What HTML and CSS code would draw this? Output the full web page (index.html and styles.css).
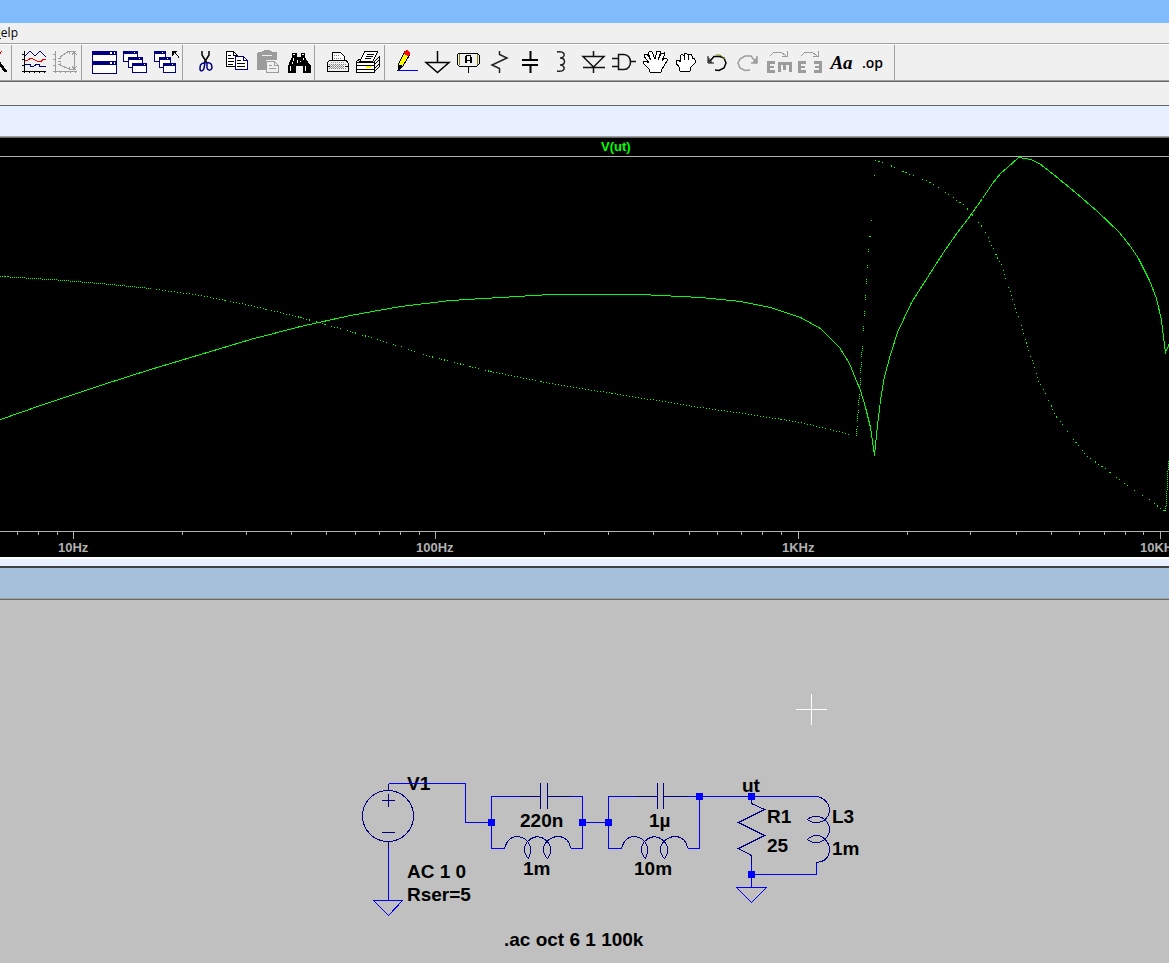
FILE: index.html
```html
<!DOCTYPE html>
<html lang="en">
<head>
<meta charset="utf-8">
<title>V(ut)</title>
<link rel="stylesheet" href="styles.css">
</head>
<body>
<div class="app">
  <div class="titlebar"></div>
  <nav class="menu"><button class="menu-item" type="button"><u>H</u>elp</button></nav>
  <div class="toolbar">
    <div class="group group-cut">
      <button class="tool" type="button" aria-label="Run"><svg class="icon" viewBox="0 0 31 34"><path d="M17 14L26 26" stroke="#000" stroke-width="3"/><path d="M19 9L22 5" stroke="#f00" stroke-width="1"/></svg></button>
    </div>
    <div class="group">
      <button class="tool" type="button" aria-label="Pick visible traces"><svg class="icon" viewBox="0 0 31 34"><path d="M5 5V27M3 25H27M3 8H5M3 13H5M3 19H5M10 25V27M15 25V27M20 25V27M25 25V27" class="k"/><path d="M6 10L11 5L16 10L21 5L27 11" class="n"/><path d="M6 14L9 14L12 12L18 15L22 16L24 13L27 14" stroke="#f00"/><path d="M6 18H11V20H15L18 18H20V20H27" class="n"/></svg></button>
      <button class="tool" type="button" aria-label="Autorange"><svg class="icon" viewBox="0 0 31 34"><path d="M5 5V27M3 25H27M3 8H5M3 13H5M3 19H5M10 25V27M15 25V27M20 25V27M25 25V27M26 5H19L10 11M10 19L19 23L26 24M8 12H11M10 11V13M8 15H11M8 18H11M10 17V20M24 6V23M22 9L24 6L27 9M22 20L24 23L27 20M19 5V8M19 21V24" class="g"/></svg></button>
    </div>
    <div class="group">
      <button class="tool" type="button" aria-label="Tile windows"><svg class="icon" viewBox="0 0 31 34"><path d="M3 5H27V27H3Z" fill="#fff" class="n"/><path d="M3 5H28V9H3ZM3 15H28V19H3Z" fill="#000080" stroke="none"/><path d="M21 6H23V8H21ZM25 6H26V8H25ZM21 16H23V18H21ZM25 16H26V18H25Z" fill="#fff" stroke="none"/></svg></button>
      <button class="tool" type="button" aria-label="Cascade windows"><svg class="icon" viewBox="0 0 31 34"><g fill="#fff" class="n"><path d="M3 5H17V15H3Z"/><path d="M3 7H17M3 6H17"/><path d="M8 11H22V21H8Z"/><path d="M8 13H22M8 12H22"/><path d="M12 17H26V26H12Z"/><path d="M12 19H26M12 18H26"/></g><path d="M14 6H15M19 12H20M24 18H25" stroke="#fff"/></svg></button>
      <button class="tool" type="button" aria-label="Close all windows"><svg class="icon" viewBox="0 0 31 34"><g fill="#fff" class="n"><path d="M3 5H14V15H3Z"/><path d="M3 7H14M3 6H14"/><path d="M8 11H19V21H8Z"/><path d="M8 13H19M8 12H19"/><path d="M12 17H24V26H12Z"/><path d="M12 19H24M12 18H24"/></g><path d="M11 6H12M16 12H17M21 18H22" stroke="#fff"/><path d="M27 12V10L22 5M21 10V5H26M22 9V6H25" class="k"/></svg></button>
    </div>
    <div class="group">
      <button class="tool" type="button" aria-label="Cut"><svg class="icon smooth" viewBox="0 0 31 34"><path d="M12 5V9L17 17M19 5V9L14 17" stroke="#000" stroke-width="1.5"/><path d="M15 17C10 17 10 20 10 23C10 26 14 25 14 22ZM17 17C21 16 22 19 22 22C21 25 18 25 17 22Z" stroke="#000080" stroke-width="1.5"/></svg></button>
      <button class="tool" type="button" aria-label="Copy"><svg class="icon" viewBox="0 0 31 34"><path d="M5 5H12L16 9V20H5Z" fill="#fff" class="k"/><path d="M12 5V9H16M7 9H10M7 12H13M7 15H13M7 18H12" class="k"/><path d="M14 10H22L26 14V23H14Z" fill="#fff" class="n"/><path d="M22 10V14H26" class="n"/><path d="M16 14H20M16 17H24M16 20H24" class="k"/></svg></button>
      <button class="tool" type="button" aria-label="Paste"><svg class="icon" viewBox="0 0 31 34"><path d="M5 8Q5 6 7 6H10Q11 4 15 4Q19 4 20 6H23Q25 6 25 8V14H14V24H7Q5 24 5 22Z" fill="#9c9c9c" stroke="none"/><path d="M10 9H20" stroke="#f0f0f0"/><path d="M14 15H22L26 19V26H14Z" fill="#f0f0f0" class="g"/><path d="M22 15V19H26M17 19H20M17 22H24" class="g"/></svg></button>
      <button class="tool" type="button" aria-label="Find"><svg class="icon" viewBox="0 0 31 34"><path d="M9 7H14V11H18V7H22V11L25 16L28 20V27H20V20H13V27H5V20L7 15L9 11Z" fill="#000" stroke="none"/><path d="M10 8H12M19 8H21M10 12V15M9 16V18M7 20V25M14 14V17M17 15H18M22 20V25M20 12V14" stroke="#fff"/></svg></button>
    </div>
    <div class="group">
      <button class="tool" type="button" aria-label="Print"><svg class="icon" viewBox="0 0 31 34"><path d="M10 14L11 6H18L22 10V14" fill="#fff" class="k"/><path d="M12 9H17M12 12H20M7 18H25M7 20H25M7 22H25" stroke="#808080" stroke-dasharray="1 1"/><path d="M8 14H24L26 17V25H5V17ZM5 20H8M23 20H26" class="k"/><path d="M8 19H22M8 21H22M9 16H23" stroke="#999" stroke-dasharray="1 1"/></svg></button>
      <button class="tool" type="button" aria-label="Print setup"><svg class="icon" viewBox="0 0 31 34"><path d="M7 15L12 5H25L20 15Z" fill="#fff" class="k"/><path d="M14 8H21M13 10H20M12 12H18" class="k"/><path d="M3 16H21V26H3Z" fill="#fff" class="k"/><path d="M3 16L7 13M21 16L26 11V21L21 26M3 23H21L26 18M3 19H21L26 14" class="k"/><path d="M13 21H18" stroke="#ff0" stroke-width="2"/></svg></button>
    </div>
    <div class="group">
      <button class="tool" type="button" aria-label="Wire"><svg class="icon" viewBox="0 0 31 34"><path d="M7 17L13 5L18 8L11 20L6 24Z" fill="#ff0" class="k"/><path d="M6 18L11 20L6 25Z" fill="#000" stroke="none"/><path d="M13 5L15 4L18 6V9L16 10L12 8Z" fill="#f00" stroke="none"/><path d="M6 24H26" stroke="#00f"/></svg></button>
      <button class="tool" type="button" aria-label="Ground"><svg class="icon smooth" viewBox="0 0 31 34"><path d="M14.5 5V16M3 16.5H26L14.5 26.5Z" stroke="#000" stroke-width="1.5"/></svg></button>
      <button class="tool" type="button" aria-label="Label net"><svg class="icon" viewBox="0 0 31 34"><path d="M5 7H23L25 9V18L23 20H5L3 18V9ZM14 20V27" class="k"/><path d="M5 8V19M23 8V19" stroke="#808000"/><path d="M11 17V11L13 9H16L17 11V17M11 14H17M12 10V17M16 10V17" class="k"/></svg></button>
      <button class="tool" type="button" aria-label="Resistor"><svg class="icon smooth" viewBox="0 0 31 34"><path d="M14.5 5V8.5L22 12L7 19L14.5 22.5V27" stroke="#222" stroke-width="1.5"/></svg></button>
      <button class="tool" type="button" aria-label="Capacitor"><svg class="icon smooth" viewBox="0 0 31 34"><path d="M14.5 5V13M14.5 20V27M6 14H22M6 19H22" stroke="#000" stroke-width="2"/></svg></button>
      <button class="tool" type="button" aria-label="Inductor"><svg class="icon smooth" viewBox="0 0 31 34"><path d="M10 6C19 4 19 12 13 12C19 12 19 19 13 19C19 19 19 27 10 25" stroke="#222" stroke-width="1.5"/></svg></button>
      <button class="tool" type="button" aria-label="Diode"><svg class="icon smooth" viewBox="0 0 31 34"><path d="M15.5 5V10M5 10.5H26L15.5 21ZM5 21.5H27M15.5 21V27" stroke="#111" stroke-width="1.5"/></svg></button>
      <button class="tool" type="button" aria-label="Component"><svg class="icon smooth" viewBox="0 0 31 34"><path d="M9.5 8.5H15C19 8.5 21.5 12 21.5 16C21.5 20 19 23.5 15 23.5H9.500ZM3 12.500H9M3 20.500H9M21 15.500H27" stroke="#111" stroke-width="1.5"/></svg></button>
      <button class="tool" type="button" aria-label="Move"><svg class="icon" viewBox="0 0 31 34"><path d="M10 26L9 23L3 17V15H6L9 17L4 10V8H7L11 14L8 7L10 5L12 6L15 13L17 5H20V8L18 14L21 8L24 7V10L22 15L25 12L27 13V15L22 23L21 26Z" fill="#fff" class="k"/></svg></button>
      <button class="tool" type="button" aria-label="Drag"><svg class="icon" viewBox="0 0 31 34"><path d="M9 25L8 21L5 17V14H8L9 16V10L11 8L13 10V14V8L15 7L17 9V14V9L20 8L21 10V13L23 12L24 14V17L20 21L19 25Z" fill="#fff" class="k"/></svg></button>
      <button class="tool" type="button" aria-label="Undo"><svg class="icon smooth" viewBox="0 0 31 34"><path d="M8 15L12 10.500H18L22 12L24 17L22 22L17 24.500L13 24" stroke="#000" stroke-width="1.500"/><path d="M14 9H18L23 13" stroke="#808000"/><path d="M6 10V17H12M7 12V16H10M8 14V15" class="k"/></svg></button>
      <button class="tool" type="button" aria-label="Redo"><svg class="icon smooth" viewBox="0 0 31 34"><path d="M22 15L18 10H12L7 13L5 17L7 22L12 24.500L17 24M24 10V17H18M23 12V16H20" stroke="#9c9c9c" stroke-width="1.500"/></svg></button>
      <button class="tool" type="button" aria-label="Rotate"><svg class="icon" viewBox="0 0 31 34"><path d="M6 10L10 6H17L22 10M23 5V10H18" class="g"/><path d="M3 15H11V18H6V20H10V22H6V24H11V27H3ZM14 16H28V26H25V19H22V24H19V19H17V26H14Z" fill="#9c9c9c"/></svg></button>
      <button class="tool" type="button" aria-label="Mirror"><svg class="icon" viewBox="0 0 31 34"><path d="M6 10L10 6H17L22 10M23 5V10H18" class="g"/><path d="M3 15H11V18H6V20H10V22H6V24H11V27H3ZM27 15H19V18H24V20H20V22H24V24H19V27H27Z" fill="#9c9c9c"/></svg></button>
      <button class="tool text-tool" type="button">Aa</button>
      <button class="tool op-tool" type="button">.op</button>
    </div>
  </div>
  <div class="tabstrip"></div>
  <section class="pane plot-pane">
    <div class="pane-title"></div>
    <svg class="plot" role="img" aria-label="AC response of V(ut)">
      <text x="601" y="13" class="trace-name">V(ut)</text>
      <g class="axis">
        <rect x="0" y="18" width="100%" height="1"/>
        <rect x="0" y="393" width="100%" height="1"/>
        <path class="tick" transform="translate(.5 0)" d="M17 393v4M38 393v4M57 393v4M73 393v8M182 393v4M246 393v4M291 393v4M326 393v4M355 393v4M379 393v4M400 393v4M419 393v4M435 393v8M544 393v4M608 393v4M653 393v4M689 393v4M717 393v4M741 393v4M762 393v4M781 393v4M798 393v8M907 393v4M970 393v4M1016 393v4M1051 393v4M1079 393v4M1104 393v4M1125 393v4M1143 393v4M1160 393v8"/>
        <text x="58" y="414">10Hz</text>
        <text x="416" y="414">100Hz</text>
        <text x="782" y="414">1KHz</text>
        <text x="1140" y="414">10KHz</text>
      </g>
      <g class="trace" transform="translate(.5 -137.5)">
        <path d="M0 419L40 405L100 385L150 369L200 354L250 339L300 326L350 315L400 306L450 300L500 297L550 294L600 294L640 294L700 297L740 301L770 307L800 317L820 328L839 347L849 363L855 378L860 390L865 407L870 427L874 455L877 425L880 400L884 376L890 354L897 332L911 302L927 277L943 252L957 232L967 219L977 205L982 198L992 183L1000 173L1007 167L1018 157L1030 159L1039 163L1053 174L1075 192L1097 211L1119 232L1130 246L1138 258L1149 280L1156 298L1161 320L1165 352L1169 343"/>
        <path stroke-dasharray="1 1" d="M0 276L50 279L100 283L150 288"/>
        <path stroke-dasharray="1 2" d="M150 288L200 295L250 305L300 317"/>
        <path stroke-dasharray="1 2 1 2 1 2 1 6" d="M300 317L350 331L400 346L430 356L490 371"/>
        <path stroke-dasharray="1 2" d="M490 371L550 383L600 391L650 399L700 407L750 414L800 422L850 434"/>
        <path stroke-dasharray="1 1 1 1 1 1 1 1 1 1 1 5" d="M856 436L857 420L859 393L862 343"/>
        <path stroke-dasharray="1 1 1 1 1 11" d="M863 331L864 314L866 280L867 265"/>
        <path stroke-dasharray="1 1 1 13" d="M868 252L869 236"/>
        <path d="M869 236h1M870 220h1M873 175h1M874 160h1"/>
        <path stroke-dasharray="1 3 1 8" d="M878 161L890 165L905 172"/>
        <path stroke-dasharray="1 3 1 3 1 3 1 5" d="M905 172L930 182L947 193L965 206L974 217L984 229L991 245L1001 265L1008 286L1014 305L1021 326L1030 355L1038 380L1046 395L1055 415L1065 428L1077 444L1087 456L1103 467L1120 480L1138 493L1150 500L1160 508L1165 511"/>
        <path stroke-dasharray="1 1" d="M1165 511L1166 500L1168 460"/>
      </g>
    </svg>
    <div class="pane-edge"></div>
  </section>
  <section class="pane schematic-pane">
    <div class="schematic-title"></div>
    <svg class="schematic" role="img" aria-label="Filter schematic">
      <defs>
        <path id="coil" d="M504 848C506 840 511 836 516 836C524 836 530 842 530 849C530 853 529 856 528 858C526 856 524 853 524 849C524 842 530 837 537 836C544 837 550 842 550 849C550 853 549 856 547 858C545 856 543 853 543 849C543 842 550 836 558 836C564 836 569 840 570 848"/>
      </defs>
      <g class="labels" transform="translate(0 -600)">
        <text x="407" y="790">V1</text>
        <text x="407" y="878">AC 1 0</text>
        <text x="407" y="901">Rser=5</text>
        <text x="520" y="827">220n</text>
        <text x="523" y="875">1m</text>
        <text x="649" y="827">1µ</text>
        <text x="634" y="875">10m</text>
        <text x="742" y="792">ut</text>
        <text x="767" y="823">R1</text>
        <text x="767" y="852">25</text>
        <text x="832" y="823">L3</text>
        <text x="832" y="855">1m</text>
        <text x="504" y="946">.ac oct 6 1 100k</text>
      </g>
      <g class="part" transform="translate(.5 -599.5)">
        <circle cx="387.5" cy="815.5" r="25.5"/>
        <path d="M381 800H394M388 793V806M381 832H394M388 783V790M388 841V847"/>
        <path d="M519 796H540M547 796H570M540 782V808M547 782V808M634 796H657M663 796H687M657 782V808M663 782V808"/>
        <use href="#coil"/>
        <use href="#coil" x="117"/>
        <path d="M751 799V803L764 809L738 822L764 835L738 848L751 855V862"/>
        <path d="M817 796C825 798 829 804 829 809C829 816 824 822 816 822C812 822 809 821 807 819C809 817 812 816 816 816C823 816 829 822 829 829C829 836 823 842 816 842C812 842 809 841 807 839C809 837 812 835 816 835C823 835 829 842 829 849C829 856 825 861 816 862"/>
      </g>
      <g class="wire" transform="translate(.5 -599.5)">
        <path d="M388 783H465V822H491M388 847V900M373 900H402L388 915Z"/>
        <path d="M519 796H491V848H504M570 796H582V848H570M582 822H608M634 796H608V848H621M687 796H699V848H687M687 796H817M816 862V874H751M751 862V887M736 887H766L751 902Z"/>
      </g>
      <g class="node" transform="translate(0 -600)">
        <rect x="488" y="819" width="7" height="7"/><rect x="579" y="819" width="7" height="7"/><rect x="605" y="819" width="7" height="7"/><rect x="696" y="793" width="7" height="7"/><rect x="748" y="793" width="7" height="7"/><rect x="748" y="871" width="7" height="7"/>
      </g>
      <path class="cursor" transform="translate(.5 -599.5)" d="M795 709H826M811 693V724"/>
    </svg>
  </section>
</div>
</body>
</html>
```
FILE: styles.css
```css
* { box-sizing: border-box; }

body {
  margin: 0;
  background: #f0f0f0;
  font-family: "Liberation Sans", Arial, sans-serif;
}

.app {
  display: flex;
  flex-direction: column;
  min-height: 100vh;
  overflow: hidden;
}

.titlebar {
  height: 23px;
  background: #80bcfc;
}

.menu {
  display: flex;
  height: 21px;
  border-bottom: 1px solid #a0a0a0;
}

.menu-item {
  margin: 0 0 0 -8px;
  padding: 0;
  border: 0;
  background: none;
  color: #000;
  font: 12px/20px "Open Sans", sans-serif;
}

.toolbar {
  display: flex;
  height: 38px;
  border-top: 1px solid #fff;
  border-bottom: 1px solid #696969;
  box-shadow: inset 0 -1px #a0a0a0;
}

.group {
  display: flex;
  flex: none;
  margin-bottom: 1px;
  padding: 1px 0 0 7px;
  border-left: 1px solid #a0a0a0;
}

.group:first-child {
  border-left: 0;
}

.group:last-child {
  padding-right: 6px;
  border-right: 1px solid #a0a0a0;
}

.group-cut {
  width: 11px;
  padding-left: 0;
  justify-content: flex-end;
  overflow: hidden;
}

.tool {
  flex: none;
  width: 31px;
  height: 34px;
  padding: 0;
  border: 0;
  background: none;
  color: #000;
}

.icon {
  display: block;
  width: 31px;
  height: 34px;
  fill: none;
  shape-rendering: crispEdges;
}

.smooth { shape-rendering: auto; }
.k { stroke: #000; }
.n { stroke: #000080; }
.g { stroke: #9c9c9c; }

.text-tool {
  font: italic bold 19px/32px "Liberation Serif", serif;
}

.op-tool {
  font: 600 14px/30px "Open Sans", sans-serif;
}

.tabstrip {
  height: 24px;
  border-bottom: 1px solid #646464;
}

.pane {
  display: flex;
  flex-direction: column;
}

.pane-title {
  height: 32px;
  background: #e8f0ff;
  border-bottom: 1px solid #696969;
  box-shadow: inset 0 -1px #a0a0a0;
}

.plot {
  display: block;
  width: 100%;
  height: 419px;
  background: #000;
}

.trace-name {
  fill: #0f0;
  font-size: 13px;
  font-weight: bold;
}

.axis {
  fill: #b0b0b0;
  font-size: 13px;
  font-weight: bold;
}

.tick {
  stroke: #b0b0b0;
  shape-rendering: crispEdges;
}

.trace {
  fill: none;
  stroke: #0f0;
  shape-rendering: crispEdges;
}

.pane-edge {
  height: 9px;
  background: #e8f0ff;
  border-top: 2px solid #fff;
}

.schematic-pane {
  flex: 1;
  border-top: 2px solid #404040;
  background: #c0c0c0;
}

.schematic-title {
  height: 32px;
  background: #a6c0dc;
  border-bottom: 1px solid #696969;
  box-shadow: inset 0 -1px #a0a0a0;
}

.schematic {
  display: block;
  flex: 1;
  width: 100%;
  min-height: 360px;
}

.labels {
  fill: #000;
  font-size: 19px;
  font-weight: bold;
}

.part, .wire, .cursor {
  fill: none;
  shape-rendering: crispEdges;
}

.part { stroke: #000080; }
.wire { stroke: #00f; }
.node { fill: #00f; }
.cursor { stroke: #fff; }
```
